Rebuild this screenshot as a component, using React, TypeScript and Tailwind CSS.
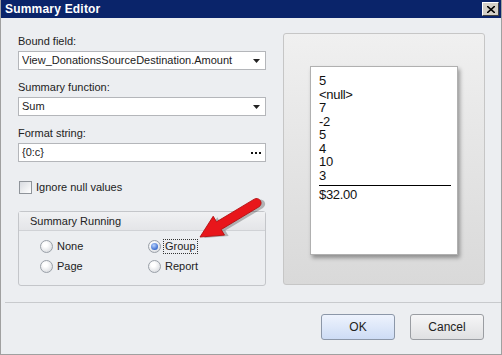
const VALUES = ['5', '<null>', '7', '-2', '5', '4', '10', '3']

function Combo({ value, ellipsis }: { value: string; ellipsis?: boolean }) {
  return (
    <div className="mt-[3px] h-[19px] w-[248px] bg-white border border-[#b4b6ba] flex items-center pl-[3px] pr-[5px]">
      <span className="flex-1 truncate">{value}</span>
      {ellipsis ? (
        <span className="flex gap-[2px] mr-[-1px]">
          <span className="w-[2px] h-[2px] bg-[#111]" />
          <span className="w-[2px] h-[2px] bg-[#111]" />
          <span className="w-[2px] h-[2px] bg-[#111]" />
        </span>
      ) : (
        <svg width="7" height="4" viewBox="0 0 7 4"><path d="M0 0h7L3.5 4z" fill="#222" /></svg>
      )}
    </div>
  )
}

function Radio({ label, checked, focus }: { label: string; checked?: boolean; focus?: boolean }) {
  return (
    <div className="flex items-center gap-[3px] h-[20px]">
      <span className="w-[13px] h-[13px] rounded-full border border-[#9aa0a8] bg-[radial-gradient(circle_at_40%_35%,#ffffff_20%,#d4d7dc_90%)] flex items-center justify-center">
        {checked && <span className="w-[7px] h-[7px] rounded-full bg-[radial-gradient(circle_at_40%_35%,#b9d3ff_0%,#2a5fc8_80%)]" />}
      </span>
      <span className={focus ? 'outline outline-1 outline-dotted outline-[#333] px-[1px] leading-[13px]' : 'px-[1px]'}>{label}</span>
    </div>
  )
}

export default function App() {
  return (
    <div className="w-[502px] h-[355px] bg-[#eceef1] font-['Liberation_Sans',Arial,sans-serif] text-[11px] text-[#222] flex flex-col border-l border-r border-b border-[#a0a0a0] relative overflow-hidden">
      {/* title bar */}
      <div className="h-[18px] bg-[#0a246a] flex items-center justify-between pl-[4px] pr-[2px] shrink-0">
        <span className="text-white font-bold text-[12px] tracking-[0.2px]">Summary Editor</span>
        <button className="w-[17px] h-[14px] bg-[#d4d0c8] border border-t-white border-l-white border-r-[#404040] border-b-[#404040] flex items-center justify-center">
          <svg width="8" height="7" viewBox="0 0 8 7"><path d="M0 0l8 7M8 0L0 7" stroke="#000" strokeWidth="1.6" /></svg>
        </button>
      </div>

      <div className="flex flex-1 pt-[15px] pl-[17px]">
        {/* left column */}
        <div className="w-[248px] flex flex-col pt-[1px]">
          <div className="leading-[14px]">Bound field:</div>
          <Combo value="View_DonationsSourceDestination.Amount" />
          <div className="leading-[14px] mt-[10px]">Summary function:</div>
          <Combo value="Sum" />
          <div className="leading-[14px] mt-[10px]">Format string:</div>
          <Combo value="{0:c}" ellipsis />

          <label className="flex items-center gap-[4px] mt-[18px] ml-[1px] leading-[14px]">
            <span className="w-[13px] h-[13px] border border-[#8f949a] bg-[linear-gradient(135deg,#d8dbe0,#ffffff)]" />
            <span>Ignore null values</span>
          </label>

          <div className="mt-[17px] h-[75px] border border-[#c4c6ca] rounded-[3px] flex flex-col">
            <div className="h-[19px] bg-[linear-gradient(#f0f1f3,#e4e5e8)] border-b border-[#d0d2d6] flex items-center pl-[11px]">Summary Running</div>
            <div className="grid grid-cols-[108px_1fr] pl-[21px] pt-[5px]">
              <Radio label="None" />
              <Radio label="Group" checked focus />
              <Radio label="Page" />
              <Radio label="Report" />
            </div>
          </div>
        </div>

        {/* preview panel */}
        <div className="ml-[17px] w-[202px] h-[252px] border border-[#c6c6c6] rounded-[3px] bg-[linear-gradient(#f0f0f0,#d9d9d9)] flex items-start justify-center pt-[32px]">
          <div className="w-[148px] h-[189px] bg-white border border-[#b0b0b0] shadow-[2px_3px_4px_rgba(0,0,0,0.35)] pl-[8px] pt-[7px] pr-[6px] font-['Liberation_Sans_Narrow','Liberation_Sans',sans-serif] text-[13px] leading-[13.5px] tracking-[-0.3px] text-[#111] flex flex-col">
            {VALUES.map((v, i) => <div key={i}>{v}</div>)}
            <div className="border-t border-black mt-[3px] mb-[2px]" />
            <div>$32.00</div>
          </div>
        </div>
      </div>

      {/* buttons */}
      <div className="border-t border-[#c8cacd] shadow-[0_1px_0_#fff] ml-[4px] h-[52px] flex items-start justify-end gap-[15px] pr-[17px] pt-[11px] shrink-0">
        <button className="w-[74px] h-[26px] rounded-[3px] border border-[#8c97a8] bg-[linear-gradient(#eef3fd,#cddcf5)] text-[12px]">OK</button>
        <button className="w-[74px] h-[26px] rounded-[3px] border border-[#9a9da2] bg-[linear-gradient(#f6f6f7,#dfe0e2)] text-[12px]">Cancel</button>
      </div>

      {/* red annotation arrow */}
      <svg className="absolute left-0 top-0 pointer-events-none" width="502" height="355">
        <g transform="translate(199 237) rotate(-31)">
          <path d="M3 3l22 -11v6.5h44a4.5 4.5 0 0 1 0 9h-44v6.5z" fill="#000" opacity="0.25" />
          <path d="M0 0l22 -11v6.5h44a4.5 4.5 0 0 1 0 9h-44v6.5z" fill="#e8161b" stroke="#b30d10" strokeWidth="0.8" />
        </g>
      </svg>
    </div>
  )
}
